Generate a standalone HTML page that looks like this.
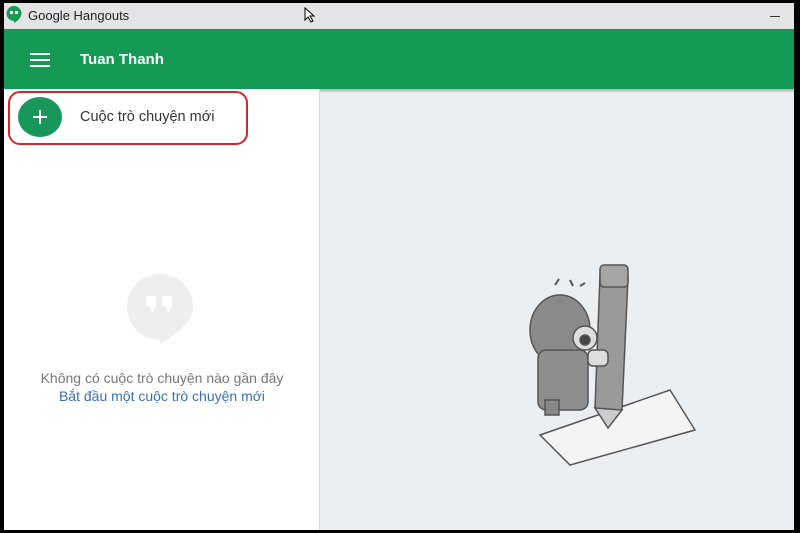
<!DOCTYPE html>
<html><head><meta charset="utf-8"><style>
*{margin:0;padding:0;box-sizing:border-box}
body{width:800px;height:533px;background:#000;position:relative;overflow:hidden;font-family:"Liberation Sans",Arial,sans-serif}
#win{position:absolute;left:4px;top:3px;width:790px;height:527px;background:#eceff1;overflow:hidden}
#title{position:absolute;left:0;top:0;width:790px;height:26px;background:#e4e4e7;}
#title .t{position:absolute;left:24px;top:5px;font-size:13px;color:#222}
#title .min{position:absolute;right:14px;top:13px;width:10px;height:1px;background:#333}
#hdr{position:absolute;left:0;top:26px;width:790px;height:60px;background:#159a55;box-shadow:0 2px 3px rgba(0,0,0,.3)}
#hdr .b{position:absolute;left:26px;width:20px;height:2px;background:#fff}
#hdr .n{position:absolute;left:76px;top:22px;font-size:15px;font-weight:bold;color:#fff}
#left{position:absolute;left:0;top:86px;width:316px;height:441px;background:#fff;border-right:1px solid #d6d6d6}
#btn{position:absolute;left:4px;top:2px;width:240px;height:54px;border:2px solid #d4262b;border-radius:12px}
#plus{position:absolute;left:14px;top:8px;width:44px;height:40px;border-radius:50%;background:#17985a}
#plus:before{content:"";position:absolute;left:15px;top:19px;width:14px;height:2px;background:#fff}
#plus:after{content:"";position:absolute;left:21px;top:13px;width:2px;height:14px;background:#fff}
#lbl{position:absolute;left:76px;top:20px;font-size:14.5px;color:#333}
.e1{position:absolute;left:0;width:316px;text-align:center;font-size:14px;color:#777;top:281px}
.e2{position:absolute;left:0;width:316px;text-align:center;font-size:14px;color:#3b6fb5;top:299px}
</style></head><body>
<div id="win">
<div id="title">
<svg style="position:absolute;left:2px;top:3px" width="16" height="18"><path d="M8 0 A7.5 7.5 0 1 0 8 15 L8 17 C12 15 15.5 11 15.5 7.5 A7.5 7.5 0 0 0 8 0Z" fill="#1a9b53"/><rect x="4" y="5" width="3" height="3" fill="#fff"/><rect x="9" y="5" width="3" height="3" fill="#fff"/></svg>
<div class="t">Google Hangouts</div><div class="min"></div>
<svg style="position:absolute;left:300px;top:4px" width="12" height="16"><path d="M1 1 L1 13 L4 10 L7 15 L9 14 L6 9 L10 9 Z" fill="#fff" stroke="#000"/></svg></div>
<div id="hdr"><div class="b" style="top:24px"></div><div class="b" style="top:30px"></div><div class="b" style="top:36px"></div><div class="n">Tuan Thanh</div></div>
<div id="left">
<div id="btn"></div>
<div id="plus"></div>
<div id="lbl">Cuộc trò chuyện mới</div>
<svg style="position:absolute;left:122px;top:185px" width="68" height="72"><path d="M34 0 A33 33 0 1 0 34 66 L34 70 C48 62 67 48 67 33 A33 33 0 0 0 34 0Z" fill="#eeeeee"/><rect x="20" y="22" width="10" height="10" fill="#fff"/><rect x="36" y="22" width="10" height="10" fill="#fff"/><path d="M24 32 L30 32 L26 40Z M40 32 L46 32 L42 40Z" fill="#fff"/></svg>
<div class="e1">Không có cuộc trò chuyện nào gần đây</div>
<div class="e2">Bắt đầu một cuộc trò chuyện mới</div>
</div>
<svg style="position:absolute;left:496px;top:247px" width="220" height="220" viewBox="0 0 220 220">
<g stroke="#555" stroke-width="1.5">
<path d="M40 185 L170 140 L195 180 L70 215 Z" fill="#f4f4f4"/>
<ellipse cx="60" cy="80" rx="30" ry="35" fill="#8a8a8a"/>
<rect x="38" y="100" width="50" height="60" rx="8" fill="#8e8e8e"/>
<rect x="45" y="150" width="14" height="15" fill="#888"/>
<circle cx="85" cy="88" r="12" fill="#ddd"/><circle cx="85" cy="90" r="5" fill="#444"/>
<path d="M100 25 L112 22 L128 28 L122 160 L108 175 L95 158 Z" fill="#9a9a9a"/>
<rect x="100" y="15" width="28" height="22" rx="4" fill="#a5a5a5"/>
<path d="M95 158 L122 160 L108 178 Z" fill="#ccc"/>
<rect x="88" y="100" width="20" height="16" rx="5" fill="#ddd"/>
</g>
<path d="M55 35 l4 -6 M70 30 l3 6 M80 36 l5 -3" stroke="#555" stroke-width="2" fill="none"/>
</svg>
</div>
</body></html>
